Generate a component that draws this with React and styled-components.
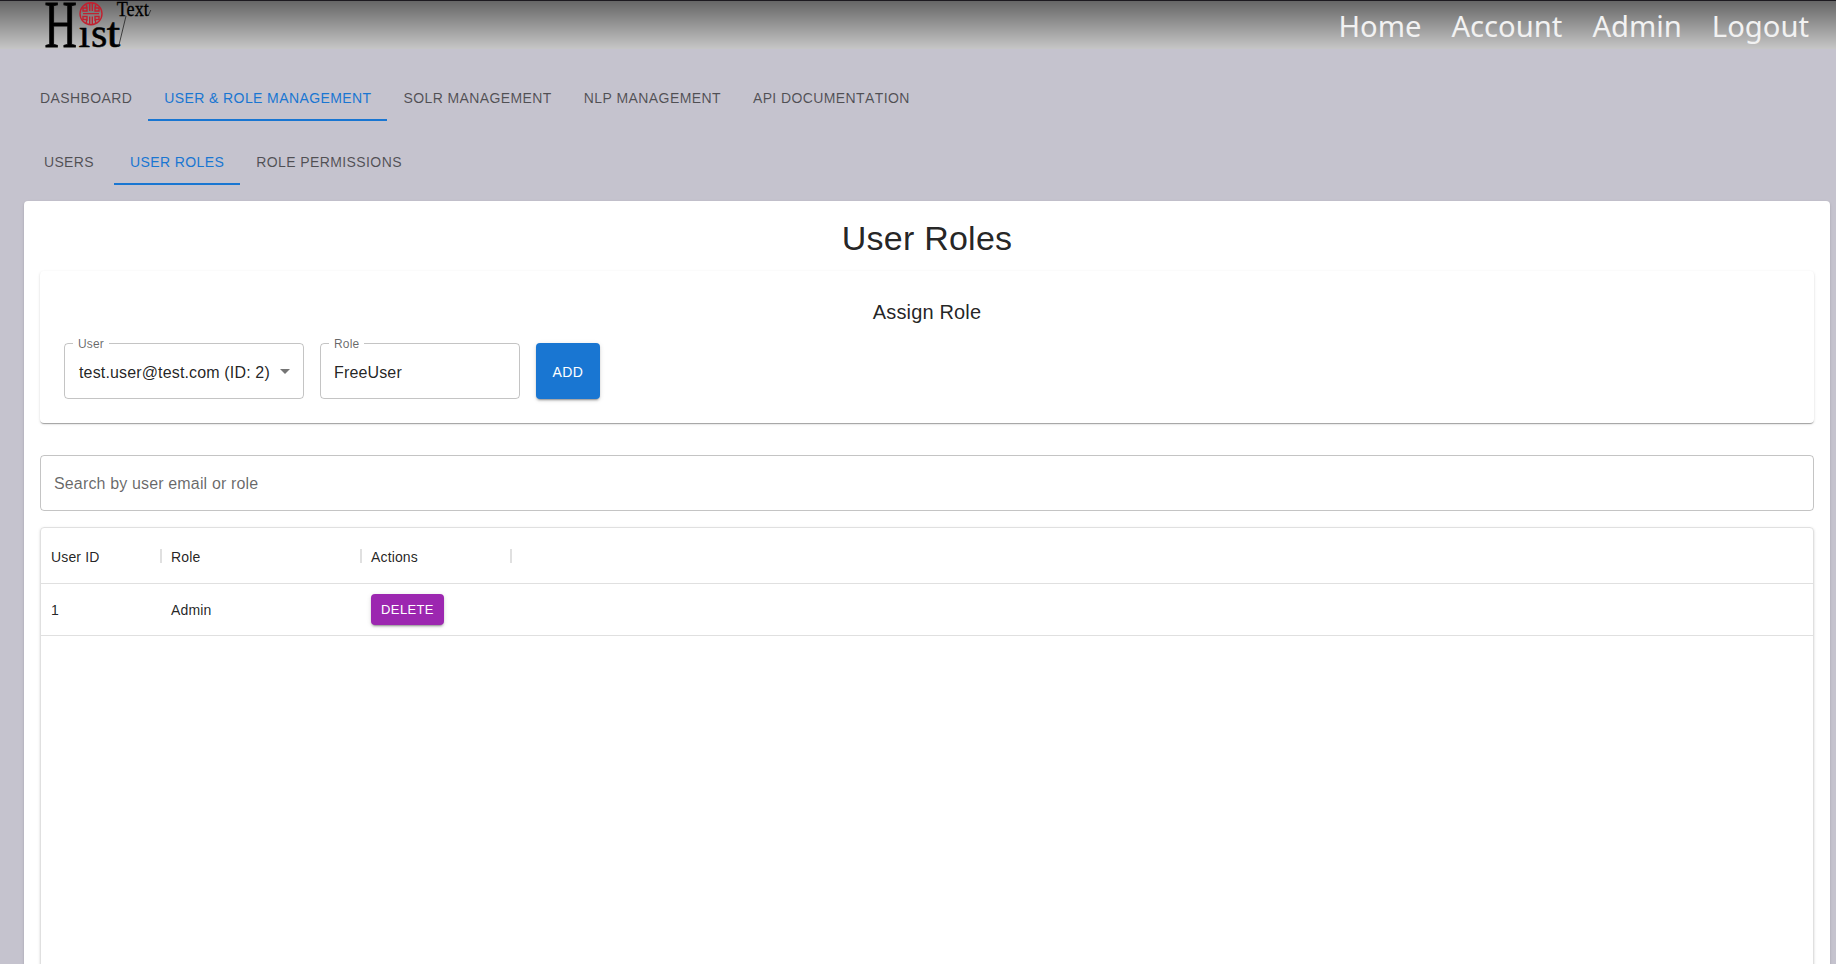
import React from 'react';
import styled, { createGlobalStyle } from 'styled-components';

const GlobalStyle = createGlobalStyle`
  *, *::before, *::after { box-sizing: border-box; }
  body { margin: 0; background: #fff; overflow: hidden; }
`;

const Page = styled.div`
  display: flex;
  flex-direction: column;
  height: 964px;
  overflow: hidden;
  background: #c5c3ce;
  color: rgba(0, 0, 0, 0.87);
  font-family: 'Liberation Sans', Helvetica, Arial, sans-serif;
`;

const Header = styled.header`
  display: flex;
  flex: none;
  justify-content: space-between;
  align-items: center;
  height: 49px;
  padding: 0 27px 0 45px;
  border-top: 1px solid #1d1a20;
  background: linear-gradient(#666, #c6c6c6);
`;

const Logo = styled.svg`
  display: block;
  width: 110px;
  height: 48px;
  overflow: visible;
  font-family: 'Liberation Serif', 'Times New Roman', serif;
`;

const Nav = styled.nav`
  display: flex;
  gap: 30px;
`;

const NavLink = styled.a`
  color: #f2f2f2;
  font: 400 29.2px/40px 'Noto Sans', 'Open Sans', sans-serif;
  margin-top: 2px;
`;

const Content = styled.main`
  flex: none;
  padding: 24px 6px 0 24px;
`;

const Tabs = styled.div`
  display: flex;
  height: 48px;
  margin-bottom: 16px;
`;

const Tab = styled.button`
  min-width: 90px;
  padding: 4px 16px 0;
  border: 0;
  border-bottom: 2px solid ${(p) => (p.$active ? '#1976d2' : 'transparent')};
  background: none;
  color: ${(p) => (p.$active ? '#1976d2' : 'rgba(0, 0, 0, 0.6)')};
  font: 400 14px/18px 'Liberation Sans', Helvetica, sans-serif;
  font-kerning: none;
  letter-spacing: 0.02857em;
  text-transform: uppercase;
  white-space: nowrap;
`;

const shadow1 = `0 2px 1px -1px rgba(0, 0, 0, 0.2), 0 1px 1px 0 rgba(0, 0, 0, 0.14),
  0 1px 3px 0 rgba(0, 0, 0, 0.12)`;
const shadow2 = `0 3px 1px -2px rgba(0, 0, 0, 0.2), 0 2px 2px 0 rgba(0, 0, 0, 0.14),
  0 1px 5px 0 rgba(0, 0, 0, 0.12)`;

const Paper = styled.section`
  padding: ${(p) => p.$padding}px;
  border-radius: 4px;
  background: #fff;
  box-shadow: ${shadow1};
`;

const Title = styled.h4`
  margin: 0 0 12px;
  padding-top: 1px;
  font-weight: 400;
  font-size: 34px;
  line-height: 41px;
  letter-spacing: 0.00735em;
  text-align: center;
`;

const Subtitle = styled.h6`
  margin: 0 0 15px;
  padding-top: 1px;
  font-weight: 400;
  font-size: 20px;
  line-height: 32px;
  letter-spacing: 0.0075em;
  text-align: center;
`;

const FormRow = styled.div`
  display: flex;
  gap: 16px;
`;

const Field = styled.fieldset`
  position: relative;
  display: flex;
  align-items: center;
  justify-content: space-between;
  width: ${(p) => p.$width};
  height: 56px;
  margin: 0;
  padding: 3px ${(p) => p.$right || 13}px 0 ${(p) => p.$left || 13}px;
  border: 1px solid rgba(0, 0, 0, 0.23);
  border-radius: 4px;
  font-size: 16px;
  letter-spacing: 0.00938em;
  white-space: nowrap;
`;

const FieldLabel = styled.span`
  position: absolute;
  top: -8px;
  left: 8px;
  padding: 0 5px;
  background: #fff;
  color: rgba(0, 0, 0, 0.6);
  font-size: 12px;
  line-height: 17px;
`;

const SelectArrow = styled.svg`
  width: 10px;
  height: 5px;
  margin-bottom: 3px;
  fill: rgba(0, 0, 0, 0.54);
`;

const SearchField = styled(Field)`
  margin: 32px 0 16px;
  padding-top: 2px;
  color: rgba(0, 0, 0, 0.6);
`;

const Button = styled.button`
  height: ${(p) => p.$height}px;
  width: ${(p) => p.$width}px;
  padding: 2px 0 0;
  border: 0;
  border-radius: 4px;
  background: ${(p) => p.$color};
  box-shadow: ${shadow2};
  color: #fff;
  font: 400 ${(p) => p.$size}px/1.75 'Liberation Sans', Helvetica, sans-serif;
  letter-spacing: 0.02857em;
`;

const Grid = styled.div`
  height: 600px;
  border: 1px solid #e0e0e0;
  border-radius: 4px;
  box-shadow: ${shadow1};
  font-size: 14px;
  letter-spacing: 0.01071em;
`;

const GridRow = styled.div`
  display: flex;
  align-items: center;
  height: ${(p) => p.$height}px;
  border-bottom: 1px solid #e0e0e0;
`;

const Cell = styled.div`
  display: flex;
  align-items: center;
  justify-content: space-between;
  width: ${(p) => p.$width}px;
  padding-left: 10px;
`;

const HeadText = styled.span`
  padding-top: 2px;
`;

const Separator = styled.i`
  width: 2px;
  height: 14px;
  margin-right: -1px;
  background: #e0e0e0;
`;

const columns = [
  { title: 'User ID', width: 120 },
  { title: 'Role', width: 200 },
  { title: 'Actions', width: 150 },
];

const HistTextLogo = () => (
  <Logo viewBox="45 1 110 48" aria-label="HistText">
    <text transform="translate(44.6 47.4) scale(.655 1)" fontSize="68.5" stroke="#000" strokeWidth=".9">H</text>
    <text x="78.5" y="47.4" fontSize="42" stroke="#000" strokeWidth=".5">ı</text>
    <text x="91" y="47.4" fontSize="42" stroke="#000" strokeWidth=".5">s</text>
    <text transform="translate(106.8 47.4) scale(1.15 1)" fontSize="42" stroke="#000" strokeWidth=".6">t</text>
    <text x="116.8" y="16" fontSize="20" textLength="32" lengthAdjust="spacingAndGlyphs" stroke="#000" strokeWidth=".3">Text</text>
    <path d="M126 16 L118.5 47 M150.8 10 L148.3 15.5" fill="none" stroke="#222" strokeWidth=".8" />
    <g fill="none" stroke="#c2202f" strokeWidth="1.4">
      <circle cx="91" cy="13.7" r="11" />
      <path d="M83 13.6H99M89.7 3V11M92.3 3V11M89.7 16.5V24.5M92.3 16.5V24.5M86.5 4.5V8H83V11H87V6.5M95.5 4.5V8H99V11H95V6.5M86.5 23V19.5H83V16.5H87V21M95.5 23V19.5H99V16.5H95V21" />
    </g>
  </Logo>
);

export default function App() {
  return (
    <Page>
      <GlobalStyle />
      <Header>
        <HistTextLogo />
        <Nav>
          {['Home', 'Account', 'Admin', 'Logout'].map((t) => (
            <NavLink key={t}>{t}</NavLink>
          ))}
        </Nav>
      </Header>
      <Content>
        <Tabs>
          {['Dashboard', 'User & Role Management', 'Solr Management', 'NLP Management', 'API Documentation'].map((t, i) => (
            <Tab key={t} $active={i === 1}>{t}</Tab>
          ))}
        </Tabs>
        <Tabs>
          {['Users', 'User Roles', 'Role Permissions'].map((t, i) => (
            <Tab key={t} $active={i === 1}>{t}</Tab>
          ))}
        </Tabs>
        <Paper $padding={16}>
          <Title>User Roles</Title>
          <Paper $padding={24}>
            <Subtitle>Assign Role</Subtitle>
            <FormRow>
              <Field $width="240px" $left={14}>
                <FieldLabel>User</FieldLabel>
                test.user@test.com (ID: 2)
                <SelectArrow viewBox="0 0 10 5">
                  <path d="M0 0L5 5L10 0Z" />
                </SelectArrow>
              </Field>
              <Field $width="200px">
                <FieldLabel>Role</FieldLabel>
                FreeUser
              </Field>
              <Button $color="#1976d2" $width={64} $height={56} $size={14}>ADD</Button>
            </FormRow>
          </Paper>
          <SearchField $width="100%">Search by user email or role</SearchField>
          <Grid>
            <GridRow $height={56}>
              {columns.map((c) => (
                <Cell key={c.title} $width={c.width}>
                  <HeadText>{c.title}</HeadText>
                  <Separator />
                </Cell>
              ))}
            </GridRow>
            <GridRow $height={52}>
              <Cell $width={120}>1</Cell>
              <Cell $width={200}>Admin</Cell>
              <Cell $width={150}>
                <Button $color="#9c27b0" $width={73} $height={31} $size={13}>DELETE</Button>
              </Cell>
            </GridRow>
          </Grid>
        </Paper>
      </Content>
    </Page>
  );
}
